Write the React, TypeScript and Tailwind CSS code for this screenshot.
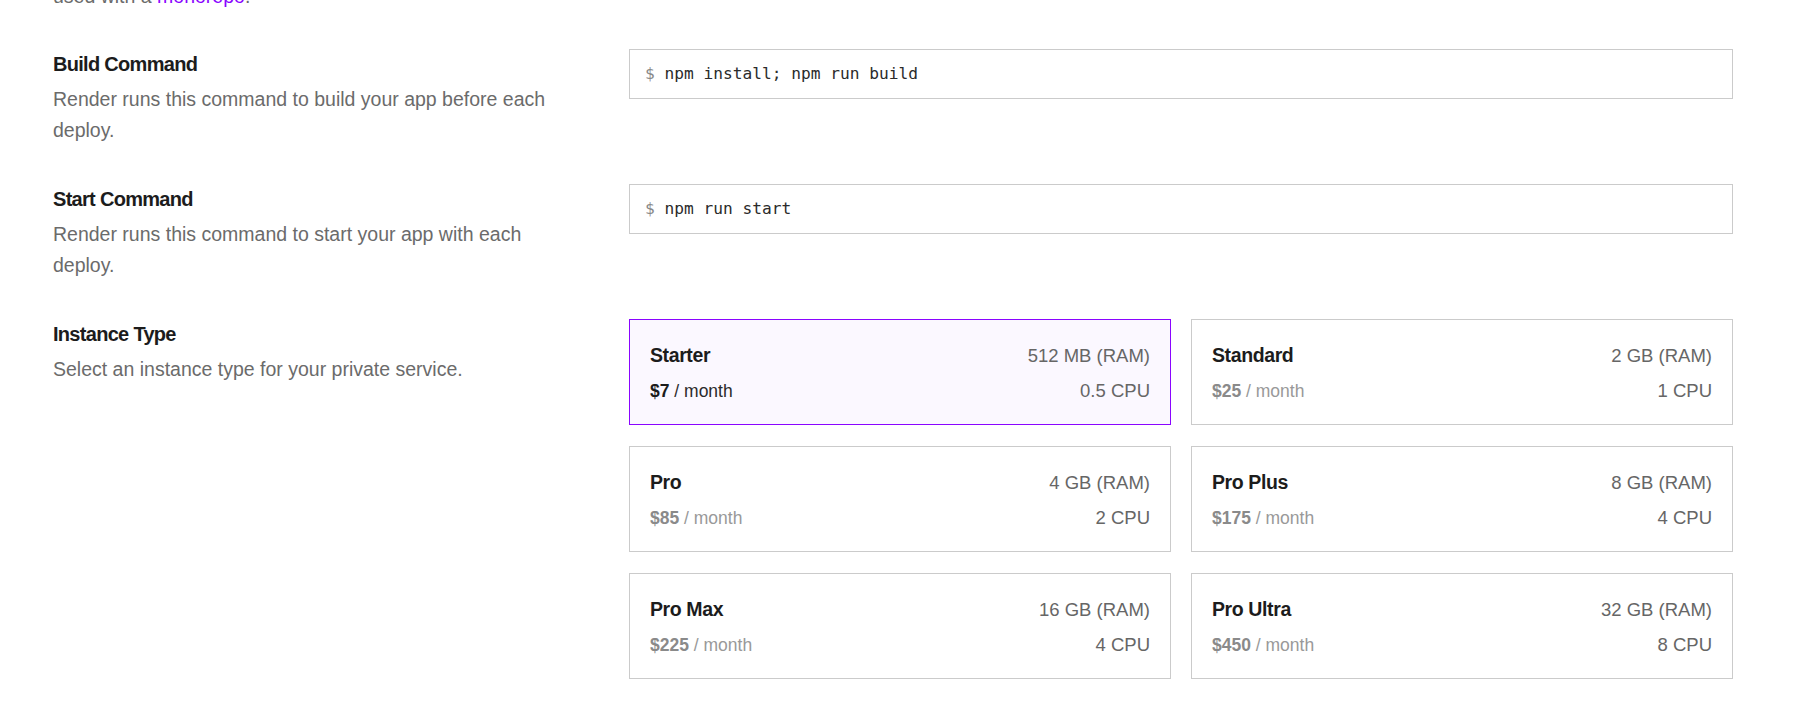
import React from "react";

const sans = { fontFamily: '"Liberation Sans", Arial, sans-serif' };

type Plan = { name: string; price: string; ram: string; cpu: string; selected?: boolean };

const plans: Plan[] = [
  { name: "Starter", price: "$7", ram: "512 MB (RAM)", cpu: "0.5 CPU", selected: true },
  { name: "Standard", price: "$25", ram: "2 GB (RAM)", cpu: "1 CPU" },
  { name: "Pro", price: "$85", ram: "4 GB (RAM)", cpu: "2 CPU" },
  { name: "Pro Plus", price: "$175", ram: "8 GB (RAM)", cpu: "4 CPU" },
  { name: "Pro Max", price: "$225", ram: "16 GB (RAM)", cpu: "4 CPU" },
  { name: "Pro Ultra", price: "$450", ram: "32 GB (RAM)", cpu: "8 CPU" },
];

function Label({ title, desc }: { title: string; desc: string }) {
  return (
    <div className="w-[576px] shrink-0 pt-[2px]">
      <div className="text-[20px] leading-[26px] font-bold tracking-[-0.035em] text-[#1c1c1c]">{title}</div>
      <div className="w-[495px] text-[19.5px] leading-[31px] text-[#6b6b6b] mt-[7px]">{desc}</div>
    </div>
  );
}

function CommandInput({ cmd }: { cmd: string }) {
  return (
    <div
      className="w-[1104px] h-[50px] border border-[#cbcbcb] flex items-center px-[15px] pt-[1px] text-[16.2px] text-[#2b2b2b]"
      style={{ fontFamily: '"DejaVu Sans Mono", "Liberation Mono", monospace' }}
    >
      <span className="text-[#8a8a8a]">$</span>
      <span className="whitespace-pre"> {cmd}</span>
    </div>
  );
}

function PlanCard({ p }: { p: Plan }) {
  return (
    <div
      className={
        "h-[106px] border px-[20px] pt-[21px] flex flex-col " +
        (p.selected ? "border-[#8a05ff] bg-[#fbf8ff]" : "border-[#cbcbcb] bg-white")
      }
    >
      <div className="flex items-baseline justify-between h-[28px] leading-[28px]">
        <span className="text-[19.5px] font-bold tracking-[-0.02em] text-[#1c1c1c]">{p.name}</span>
        <span className="text-[18.5px] text-[#666666]">{p.ram}</span>
      </div>
      <div className="flex items-baseline justify-between h-[24px] leading-[24px] mt-[10px]">
        <span className="text-[17.5px]">
          <span className={"font-bold " + (p.selected ? "text-[#1c1c1c]" : "text-[#8a8a8a]")}>{p.price}</span>
          <span className={p.selected ? "text-[#2b2b2b]" : "text-[#999999]"}> / month</span>
        </span>
        <span className="text-[18.5px] text-[#666666]">{p.cpu}</span>
      </div>
    </div>
  );
}

export default function App() {
  return (
    <div className="w-[1814px] h-[701px] overflow-hidden bg-white" style={sans}>
      <div className="pl-[53px]">
        <div className="mt-[-19px] text-[19.5px] leading-[30px] text-[#6b6b6b]">
          used with a <span className="text-[#8a05ff]">monorepo</span>.
        </div>
        <div className="flex flex-col gap-[38px] mt-[38px]">
          <div className="flex">
            <Label title="Build Command" desc="Render runs this command to build your app before each deploy." />
            <CommandInput cmd="npm install; npm run build" />
          </div>
          <div className="flex">
            <Label title="Start Command" desc="Render runs this command to start your app with each deploy." />
            <CommandInput cmd="npm run start" />
          </div>
          <div className="flex">
            <Label title="Instance Type" desc="Select an instance type for your private service." />
            <div className="w-[1104px] grid grid-cols-2 gap-x-[20px] gap-y-[21px]">
              {plans.map((p) => (
                <PlanCard key={p.name} p={p} />
              ))}
            </div>
          </div>
        </div>
      </div>
    </div>
  );
}
